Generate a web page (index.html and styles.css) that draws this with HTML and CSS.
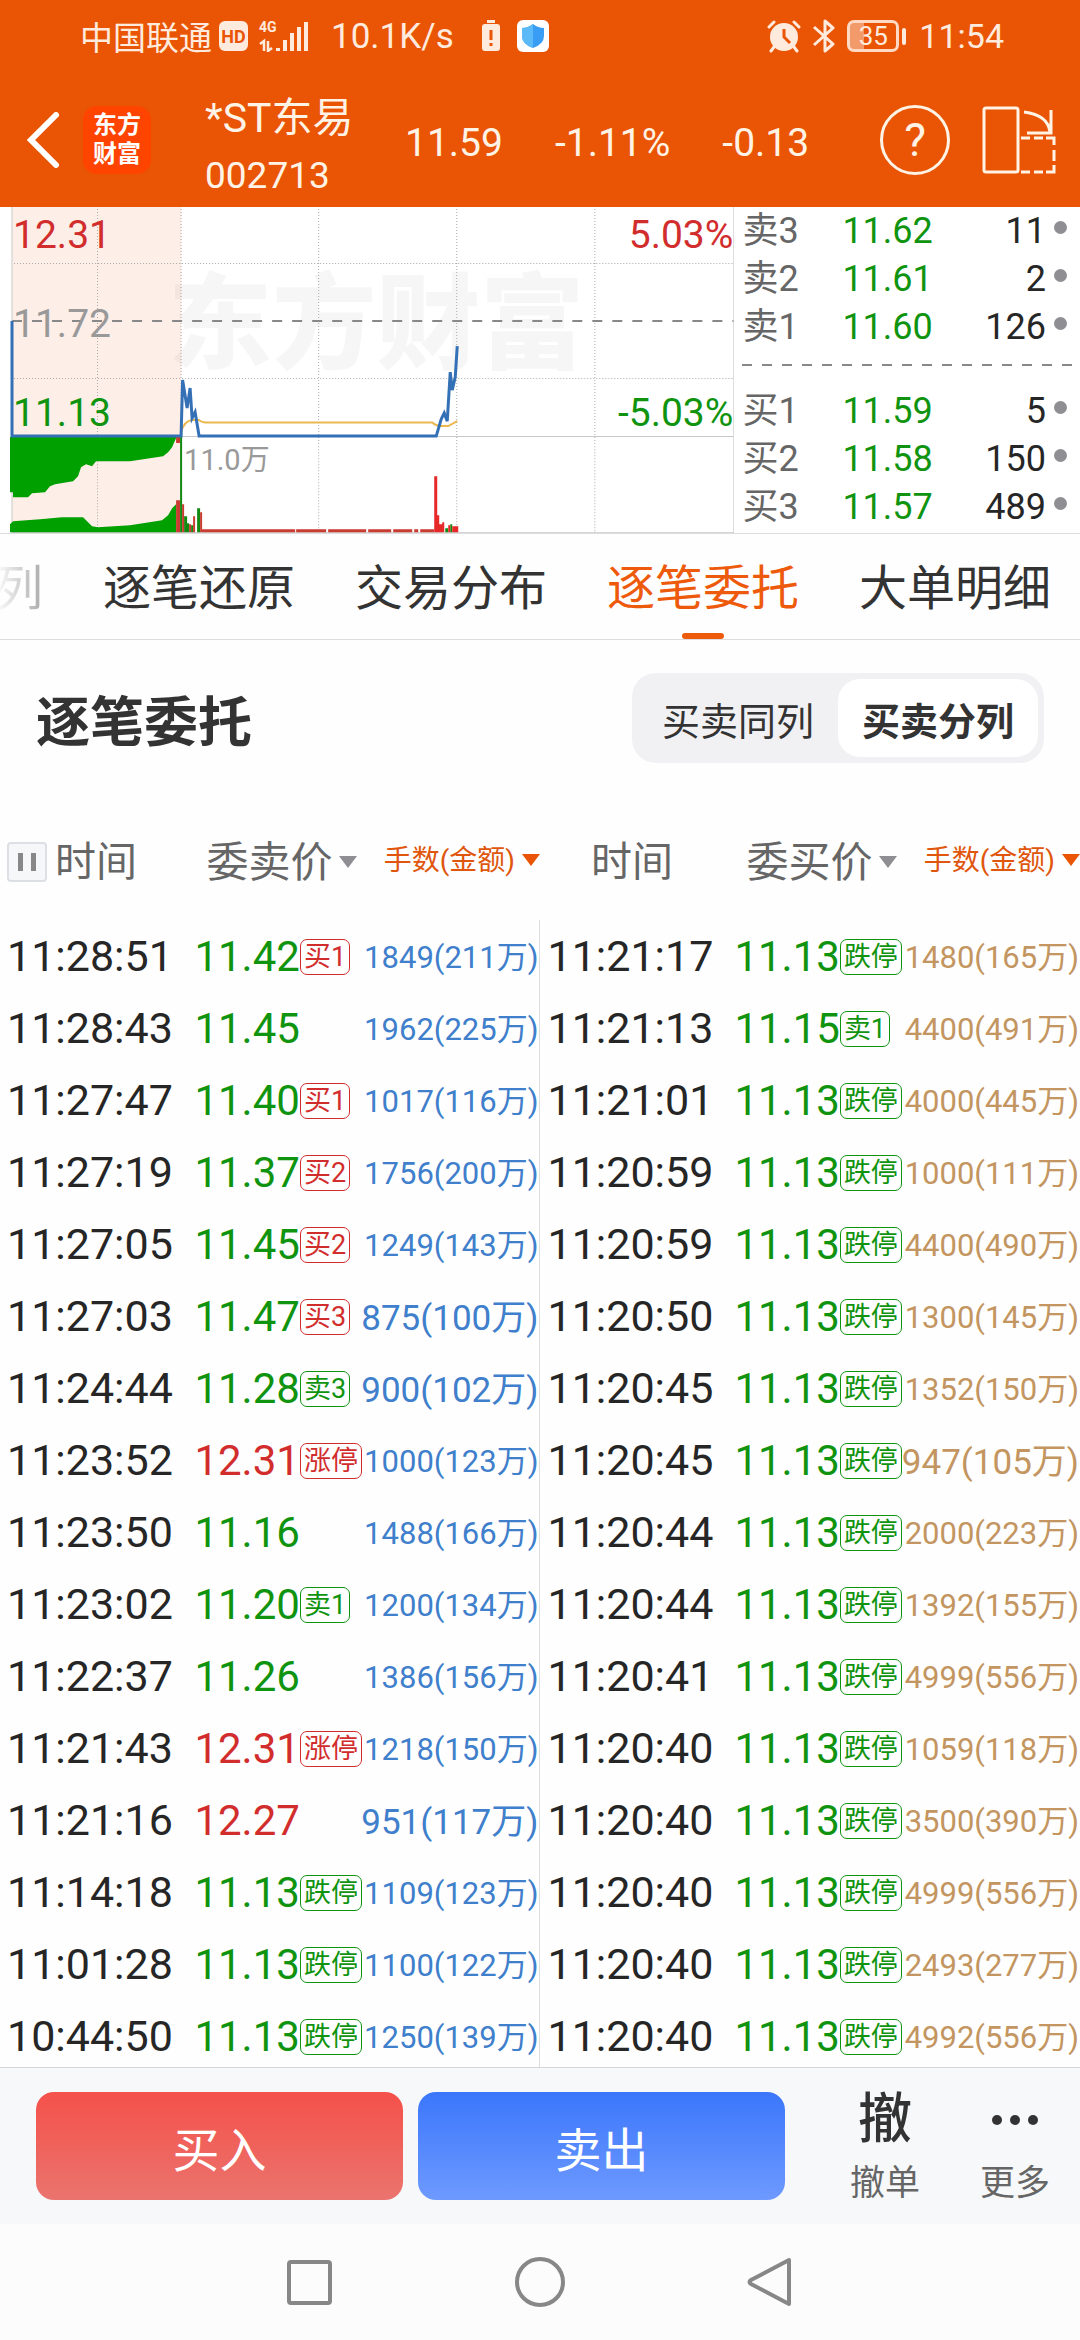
FILE: index.html
```html
<!DOCTYPE html>
<html lang="zh-CN">
<head>
    <meta charset="UTF-8">
    <meta name="viewport" content="width=device-width, initial-scale=1.0">
    <title>*ST东易 逐笔委托</title>
    <link rel="stylesheet" href="styles.css">
</head>
<body>
    <div class="status">
        <span class="carrier">中国联通</span>
        <span class="hd">HD</span>
        <div class="signal">
            <span>4G</span>
            <svg width="50" height="32" viewBox="0 0 50 32" fill="none" stroke="#ffeade"><path d="M1 24l4-3v10M9 21v10l4-3" stroke-width="2.500"/><path d="M19 28v3M26 20v11M33 13v18M40 7v24M47 2v29" stroke-width="4"/></svg>
        </div>
        <span class="speed">10.1K/s</span>
        <svg class="warn" width="18" height="32" viewBox="0 0 18 32"><path d="M5 0h8v3H5zM3 4h12q3 0 3 3v21q0 3-3 3H3q-3 0-3-3V7q0-3 3-3z" fill="#ffeade"/><path d="M9 10v10M9 23v3" stroke="#e95504" stroke-width="3"/></svg>
        <svg width="32" height="32" viewBox="0 0 32 32"><rect width="32" height="32" rx="6" fill="#fff"/><path d="M16 4q5 4 11 4v8q0 8-11 12Q5 24 5 16V8q6 0 11-4z" fill="#3a9df5"/><path d="M16 4v24Q5 24 5 16V8q6 0 11-4z" fill="#5bb9f7"/></svg>
        <div class="status-right">
            <svg width="34" height="34" viewBox="0 0 34 34"><circle cx="17" cy="18" r="14" fill="#ffeade"/><path d="M2 8l5-5M32 8l-5-5M7 28l-3 4M27 28l3 4" stroke="#ffeade" stroke-width="3" stroke-linecap="round"/><path d="M17 10v8l6 6" stroke="#e95504" stroke-width="3" fill="none"/></svg>
            <svg width="22" height="34" viewBox="0 0 22 34"><path d="M1 8l19 17-8 7V2l8 7L1 26" fill="none" stroke="#ffeade" stroke-width="3" stroke-linejoin="round"/></svg>
            <span class="battery"><span>35</span></span>
            <span>11:54</span>
        </div>
    </div>

    <header class="header">
        <a class="back" href="#" aria-label="返回"><svg width="32" height="56" viewBox="0 0 32 56"><path d="M29 3L4 28l25 25" fill="none" stroke="#fff" stroke-width="6" stroke-linecap="round"/></svg></a>
        <span class="logo">东方<br>财富</span>
        <div class="stock">
            <h1>*ST东易</h1>
            <p>002713</p>
        </div>
        <div class="quote">
            <span>11.59</span>
            <span>-1.11%</span>
            <span>-0.13</span>
        </div>
        <button class="help" aria-label="帮助">?</button>
        <button class="rotate" aria-label="横屏"><svg width="74" height="68" viewBox="0 0 74 68" fill="none" stroke="#fff3e6" stroke-width="3"><rect x="2" y="2" width="34" height="64" rx="2"/><path d="M42 6q24 3 26 20M69 4v23H45"/><path d="M39 32h9M52 32h9M64 32h8v7M72 44v11M72 59v7h-8M61 66h-9M48 66h-9"/></svg></button>
    </header>

    <section class="market">
        <svg class="chart" viewBox="0 0 734 326">
            <rect x="12" y="0" width="169" height="326" fill="#fdeee8"/>
            <text class="watermark" x="168" y="154">东方财富</text>
            <!-- grid -->
            <g stroke="#c8c8c8">
                <path d="M97.500 2V326M181 2V326M318.500 2V326M456.500 2V326M594.500 2V326M14 56.500H733M14 171.500H733" stroke="#aaa" stroke-dasharray="1 2"/>
                <path d="M12 0V326M12 229.500H733M12 325.500H734M733.500 0V326"/>
            </g>
            <path d="M12 114H733" stroke="#888" stroke-width="2" stroke-dasharray="10 10"/>
            <text class="rise" x="13" y="41">12.31</text>
            <text class="flat" x="13" y="130">11.72</text>
            <text class="fall" x="13" y="219">11.13</text>
            <text class="rise" x="733" y="41" text-anchor="end">5.03%</text>
            <text class="fall" x="733" y="219" text-anchor="end">-5.03%</text>
            <text class="volume" x="184" y="263">11.0万</text>
            <!-- call auction -->
            <path d="M10 230V285H13V290H28L32 286 45 285 50 279 55 277 73 274 78 269 81 260 86 257 92 259 96 254 130 254 163 249 168 245 172 240 176 231V230z" fill="#00a000"/>
            <path d="M10 325V317L13 314 40 312 62 310 83 310 92 319 98 320 130 318 162 313 168 308 172 301 176 297V325z" fill="#00a000"/>
            <path d="M176 230h4v6h-4zM176 293h4v32h-4z" fill="#c83c32"/>
            <path d="M180 230h2v95h-2zM184 309h3v16h-3zM187 316h2v9h-2zM197 301h3v24h-3zM191 318h2v7h-2zM445 321h3v4h-3zM450 317h2v8h-2z" fill="#128a12"/>
            <path d="M182 297h2v28h-2zM189 317h2v8h-2zM193 309h2v16h-2zM200 305h2v20h-2zM202 322h93v3h-93zM296 322h30v3h-30zM328 322h38v3h-38zM368 322h23v3h-23zM393 322h19v3h-19zM414 322h4v3h-4zM420 322h14v3h-14z" fill="#c83c32"/>
            <path d="M434 269h3v56h-3zM437 308h2v17h-2zM439 317h3v8h-3zM442 315h2v10h-2zM448 318h2v7h-2zM452 319h6v6h-6z" fill="#e62828"/>
            <path d="M181 225Q184 214 192 213H199Q201 215 206 215.500H432Q436 219 440 219H448L457 214" fill="none" stroke="#ebb850" stroke-width="2"/>
            <path d="M12 114V229H181L182.500 173 187 201 190 181 192 211 195 205 199 229H436L441 212 444 206 447 214 450 165 452 183 455 170 457 139" fill="none" stroke="#3470b5" stroke-width="3"/>
        </svg>
        <div class="book">
            <div class="level"><span>卖3</span><span class="fall">11.62</span><span class="hands">11</span><i></i></div>
            <div class="level"><span>卖2</span><span class="fall">11.61</span><span class="hands">2</span><i></i></div>
            <div class="level"><span>卖1</span><span class="fall">11.60</span><span class="hands">126</span><i></i></div>
            <div class="split"></div>
            <div class="level"><span>买1</span><span class="fall">11.59</span><span class="hands">5</span><i></i></div>
            <div class="level"><span>买2</span><span class="fall">11.58</span><span class="hands">150</span><i></i></div>
            <div class="level"><span>买3</span><span class="fall">11.57</span><span class="hands">489</span><i></i></div>
        </div>
    </section>

    <nav class="tabs">
        <a class="faded" href="#">列</a>
        <a href="#">逐笔还原</a>
        <a href="#">交易分布</a>
        <a class="active" href="#">逐笔委托</a>
        <a href="#">大单明细</a>
    </nav>

    <div class="title">
        <h2>逐笔委托</h2>
        <div class="switch">
            <button>买卖同列</button>
            <button class="on">买卖分列</button>
        </div>
    </div>

    <main class="list">
        <table>
            <colgroup>
                <col class="c-time"><col class="c-price"><col class="c-amount">
                <col class="c-time"><col class="c-price"><col class="c-amount">
            </colgroup>
            <thead>
                <tr>
                    <th class="time"><button class="pause" aria-label="暂停"></button>时间</th>
                    <th class="price">委卖价<i class="arrow"></i></th>
                    <th class="sort">手数(金额)<i class="arrow"></i></th>
                    <th class="time second">时间</th>
                    <th class="price">委买价<i class="arrow"></i></th>
                    <th class="sort">手数(金额)<i class="arrow"></i></th>
                </tr>
            </thead>
            <tbody>
                <tr><td>11:28:51</td><td class="fall">11.42<b class="rise">买1</b></td><td class="sell">1849(211万)</td><td>11:21:17</td><td class="fall">11.13<b>跌停</b></td><td class="buy">1480(165万)</td></tr>
                <tr><td>11:28:43</td><td class="fall">11.45</td><td class="sell">1962(225万)</td><td>11:21:13</td><td class="fall">11.15<b>卖1</b></td><td class="buy">4400(491万)</td></tr>
                <tr><td>11:27:47</td><td class="fall">11.40<b class="rise">买1</b></td><td class="sell">1017(116万)</td><td>11:21:01</td><td class="fall">11.13<b>跌停</b></td><td class="buy">4000(445万)</td></tr>
                <tr><td>11:27:19</td><td class="fall">11.37<b class="rise">买2</b></td><td class="sell">1756(200万)</td><td>11:20:59</td><td class="fall">11.13<b>跌停</b></td><td class="buy">1000(111万)</td></tr>
                <tr><td>11:27:05</td><td class="fall">11.45<b class="rise">买2</b></td><td class="sell">1249(143万)</td><td>11:20:59</td><td class="fall">11.13<b>跌停</b></td><td class="buy">4400(490万)</td></tr>
                <tr><td>11:27:03</td><td class="fall">11.47<b class="rise">买3</b></td><td class="sell big">875(100万)</td><td>11:20:50</td><td class="fall">11.13<b>跌停</b></td><td class="buy">1300(145万)</td></tr>
                <tr><td>11:24:44</td><td class="fall">11.28<b>卖3</b></td><td class="sell big">900(102万)</td><td>11:20:45</td><td class="fall">11.13<b>跌停</b></td><td class="buy">1352(150万)</td></tr>
                <tr><td>11:23:52</td><td class="rise">12.31<b>涨停</b></td><td class="sell">1000(123万)</td><td>11:20:45</td><td class="fall">11.13<b>跌停</b></td><td class="buy big">947(105万)</td></tr>
                <tr><td>11:23:50</td><td class="fall">11.16</td><td class="sell">1488(166万)</td><td>11:20:44</td><td class="fall">11.13<b>跌停</b></td><td class="buy">2000(223万)</td></tr>
                <tr><td>11:23:02</td><td class="fall">11.20<b>卖1</b></td><td class="sell">1200(134万)</td><td>11:20:44</td><td class="fall">11.13<b>跌停</b></td><td class="buy">1392(155万)</td></tr>
                <tr><td>11:22:37</td><td class="fall">11.26</td><td class="sell">1386(156万)</td><td>11:20:41</td><td class="fall">11.13<b>跌停</b></td><td class="buy">4999(556万)</td></tr>
                <tr><td>11:21:43</td><td class="rise">12.31<b>涨停</b></td><td class="sell">1218(150万)</td><td>11:20:40</td><td class="fall">11.13<b>跌停</b></td><td class="buy">1059(118万)</td></tr>
                <tr><td>11:21:16</td><td class="rise">12.27</td><td class="sell big">951(117万)</td><td>11:20:40</td><td class="fall">11.13<b>跌停</b></td><td class="buy">3500(390万)</td></tr>
                <tr><td>11:14:18</td><td class="fall">11.13<b>跌停</b></td><td class="sell">1109(123万)</td><td>11:20:40</td><td class="fall">11.13<b>跌停</b></td><td class="buy">4999(556万)</td></tr>
                <tr><td>11:01:28</td><td class="fall">11.13<b>跌停</b></td><td class="sell">1100(122万)</td><td>11:20:40</td><td class="fall">11.13<b>跌停</b></td><td class="buy">2493(277万)</td></tr>
                <tr><td>10:44:50</td><td class="fall">11.13<b>跌停</b></td><td class="sell">1250(139万)</td><td>11:20:40</td><td class="fall">11.13<b>跌停</b></td><td class="buy">4992(556万)</td></tr>
            </tbody>
        </table>
    </main>

    <footer class="trade">
        <button class="buy-btn">买入</button>
        <button class="sell-btn">卖出</button>
        <a class="action" href="#"><strong>撤</strong><span>撤单</span></a>
        <a class="action" href="#"><svg width="48" height="12" viewBox="0 0 48 12" fill="#333"><circle cx="6" cy="6" r="5"/><circle cx="24" cy="6" r="5"/><circle cx="42" cy="6" r="5"/></svg><span>更多</span></a>
    </footer>

    <div class="keys">
        <svg width="48" height="52" viewBox="0 0 48 52"><rect x="3" y="6" width="41" height="41" rx="2"/></svg>
        <svg width="52" height="52" viewBox="0 0 52 52"><circle cx="26" cy="26" r="23"/></svg>
        <svg width="48" height="52" viewBox="0 0 48 52"><path d="M43 4V48L5 28Q2 26 5 24z"/></svg>
    </div>
</body>
</html>
```
FILE: styles.css
```css
*{
    margin: 0;
    padding: 0;
    box-sizing: border-box;
}
body{
    display: flex;
    flex-direction: column;
    height: 100vh;
    font-family: Roboto, "Noto Sans CJK SC", sans-serif;
    color: #262626;
    background-color: #fefefe;
}
button{
    border: 0;
    background: none;
    font-family: inherit;
    color: inherit;
}
a{
    color: inherit;
    text-decoration: none;
}
svg{
    flex: none;
}
.rise{
    color: #d22d2d;
    fill: #d22d2d;
}
.fall{
    color: #109410;
    fill: #109410;
}

/* status bar */
.status{
    display: flex;
    align-items: center;
    height: 72px;
    padding: 0 76px 0 80px;
    background-color: #e95504;
    color: #ffeade;
    font-size: 34px;
}
.carrier{
    font-size: 33px;
}
.hd{
    width: 29px;
    height: 30px;
    margin: 0 11px 0 7px;
    border-radius: 6px;
    background-color: #ffeade;
    text-align: center;
    font-size: 18px;
    font-weight: 700;
    line-height: 31px;
    color: #e95504;
}
.signal{
    position: relative;
    display: flex;
}
.signal span{
    position: absolute;
    left: 0;
    top: 0;
    font-size: 14px;
    font-weight: 700;
    line-height: 14px;
}
.speed{
    margin: 0 28px 0 22px;
    font-size: 35px;
}
.warn{
    margin-right: 17px;
}
.status-right{
    display: flex;
    align-items: center;
    gap: 12px;
    margin-left: auto;
}
.battery{
    position: relative;
    width: 52px;
    height: 32px;
    margin-right: 8px;
    border: 3px solid #ffd9c4;
    border-radius: 7px;
    background: linear-gradient(90deg, #f39a6a 14px, transparent 14px);
    text-align: center;
    font-size: 26px;
    line-height: 27px;
}
.battery::after{
    content: "";
    position: absolute;
    right: -10px;
    top: 5px;
    width: 4px;
    height: 17px;
    border-radius: 2px;
    background-color: #ffeade;
}

/* header */
.header{
    display: flex;
    align-items: center;
    height: 135px;
    padding: 0 24px 0 27px;
    background-color: #e95504;
    color: #fff3e6;
}
.back{
    display: flex;
}
.logo{
    width: 68px;
    height: 68px;
    margin: 0 54px 0 24px;
    padding-top: 5px;
    border-radius: 14px;
    background-color: #ff4400;
    text-align: center;
    font-size: 24px;
    font-weight: 700;
    line-height: 29px;
    color: #fff;
}
.stock{
    width: 200px;
    padding-top: 14px;
    line-height: 58px;
    font-size: 37px;
}
.stock h1{
    font-size: 41px;
    font-weight: 400;
}
.quote{
    flex: 1;
    display: flex;
    gap: 52px;
    padding-top: 6px;
    font-size: 39px;
}
.help{
    width: 70px;
    height: 70px;
    margin-right: 32px;
    border: 3px solid #fff3e6;
    border-radius: 50%;
    font-size: 46px;
}
.rotate{
    display: flex;
}

/* chart and order book */
.market{
    display: flex;
    border-bottom: 1px solid #ddd;
    background-color: #fff;
}
.chart{
    width: 68%;
    font-size: 39px;
}
.watermark{
    font-size: 104px;
    font-weight: 900;
    fill: #000;
    opacity: 0.03;
}
.flat{
    fill: #999;
}
.volume{
    fill: #999;
    font-size: 29px;
}
.book{
    flex: 1;
    padding: 0 8px;
    font-size: 36px;
    line-height: 48px;
}
.level{
    display: flex;
    height: 48px;
}
.level span:first-child{
    width: 100px;
    color: #666;
}
.hands{
    flex: 1;
    text-align: right;
}
.level i{
    width: 13px;
    height: 13px;
    margin: 14px 5px 0 8px;
    border-radius: 50%;
    background-color: #8e8e93;
}
.split{
    height: 36px;
    background: repeating-linear-gradient(90deg, #888 0 10px, transparent 10px 20px) 0 13px / 100% 2px no-repeat;
}

/* tabs */
.tabs{
    display: flex;
    justify-content: flex-end;
    gap: 60px;
    height: 106px;
    padding-right: 29px;
    border-bottom: 1px solid #ddd;
    overflow: hidden;
    font-size: 48px;
    line-height: 110px;
    white-space: nowrap;
    color: #333;
}
.tabs a{
    height: 105px;
}
.active{
    position: relative;
    color: #ee5a0c;
}
.active::after{
    content: "";
    position: absolute;
    left: 50%;
    bottom: 0;
    width: 42px;
    height: 6px;
    margin-left: -21px;
    border-radius: 3px;
    background-color: #ee5a0c;
}
.faded{
    background: linear-gradient(90deg, #fff, #aaa);
    background-clip: text;
    color: transparent;
}

.title{
    display: flex;
    justify-content: space-between;
    align-items: center;
    height: 156px;
    padding: 0 36px;
    color: #333;
}
.title h2{
    font-size: 54px;
}
.switch{
    display: flex;
    padding: 6px;
    border-radius: 24px;
    background-color: #f1f1f4;
}
.switch button{
    width: 200px;
    height: 78px;
    border-radius: 22px;
    font-size: 38px;
}
.switch .on{
    background-color: #fff;
    font-weight: 700;
}

/* orders */
.list{
    flex: 1 0 0;
    overflow: hidden;
}
table{
    width: 100%;
    table-layout: fixed;
    border-collapse: collapse;
    white-space: nowrap;
}
.c-time{
    width: 18%;
}
.c-price{
    width: 15%;
}
.c-amount{
    width: 17%;
}
th{
    height: 124px;
    font-size: 41px;
    font-weight: 400;
    color: #666;
    text-align: left;
}
.time{
    padding-left: 7px;
}
.second{
    padding-left: 51px;
}
.price{
    padding-left: 12px;
    font-size: 42px;
}
.sort{
    font-size: 28px;
    color: #e0560c;
    text-align: right;
}
.pause{
    display: inline-block;
    width: 40px;
    height: 40px;
    margin-right: 8px;
    border: 2px solid #dcdfe4;
    border-radius: 4px;
    background: linear-gradient(90deg, #888 5px, transparent 5px 13px, #888 13px) center / 18px 18px no-repeat #f6f7f9;
    vertical-align: -4px;
}
.arrow{
    display: inline-block;
    margin-left: 7px;
    border: 9px solid transparent;
    border-top: 12px solid #8e8e93;
    border-bottom: 0;
    vertical-align: 9px;
}
.sort .arrow{
    border-top-color: #e95504;
    vertical-align: 4px;
}
td{
    height: 72px;
    font-size: 42px;
}
td:first-child, td:nth-child(4){
    padding-left: 7px;
    font-size: 43px;
}
td:nth-child(3){
    border-right: 1px solid #ddd;
}
td b{
    display: inline-block;
    height: 36px;
    padding: 0 3px;
    border: 1px solid;
    border-radius: 7px;
    font-size: 27px;
    font-weight: 400;
    line-height: 34px;
    vertical-align: 5px;
}
td.sell, td.buy{
    padding: 0 1px 4px 0;
    font-size: 31px;
    text-align: right;
}
td.sell{
    color: #3f7fcb;
}
td.buy{
    color: #c39560;
}
td.big{
    font-size: 35px;
}

/* trade bar */
.trade{
    display: flex;
    height: 157px;
    padding: 24px 0 24px 36px;
    border-top: 1px solid #d4d6da;
    background-color: #f7f8fa;
}
.buy-btn, .sell-btn{
    flex: 1;
    height: 108px;
    border-radius: 18px;
    font-size: 47px;
    color: #fff;
}
.buy-btn{
    margin-right: 15px;
    background: linear-gradient(#f4514a, #eb746e);
}
.sell-btn{
    margin-right: 35px;
    background: linear-gradient(#3b76fb, #6e9aff);
}
.action{
    display: flex;
    flex-direction: column;
    align-items: center;
    gap: 18px;
    width: 130px;
    line-height: 56px;
    font-size: 35px;
    color: #666;
}
.action strong{
    font-size: 54px;
    font-weight: 500;
    color: #333;
}
.action svg{
    margin: 22px 0;
}
.action span{
    line-height: 36px;
}

.keys{
    display: flex;
    justify-content: center;
    align-items: center;
    gap: 180px;
    height: 116px;
    background-color: #fcfcfc;
}
.keys svg{
    fill: none;
    stroke: #878787;
    stroke-width: 4px;
    stroke-linejoin: round;
}
```
